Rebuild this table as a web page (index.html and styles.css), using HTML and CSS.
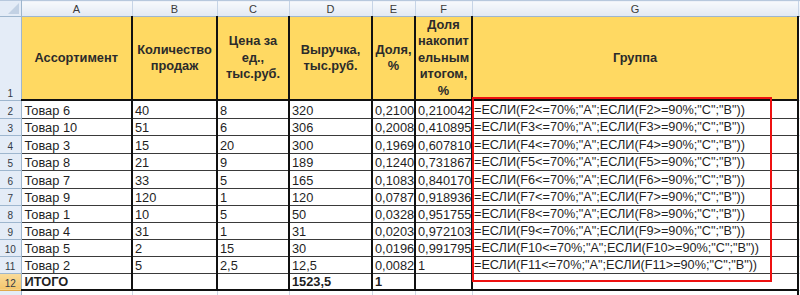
FILE: index.html
```html
<!DOCTYPE html>
<html lang="ru">
<head>
<meta charset="utf-8">
<title>ABC</title>
<link rel="stylesheet" href="styles.css">
</head>
<body>
<div class="sheet">
<table class="grid">
<colgroup>
<col class="c-rh"><col class="c-a"><col class="c-b"><col class="c-c"><col class="c-d"><col class="c-e"><col class="c-f"><col class="c-g"><col class="c-h">
</colgroup>
<tr class="colhdr">
<th class="corner"><span class="tri"></span></th><th>A</th><th>B</th><th>C</th><th>D</th><th>E</th><th>F</th><th>G</th><th class="hh"></th>
</tr>
<tr class="r1">
<th class="rh">1</th>
<td class="hd">Ассортимент</td>
<td class="hd">Количество<br>продаж</td>
<td class="hd">Цена за<br>ед.,<br>тыс.руб.</td>
<td class="hd">Выручка,<br>тыс.руб.</td>
<td class="hd">Доля,<br>%</td>
<td class="hd">Доля<br>накопит<br>ельным<br>итогом,<br>%</td>
<td class="hd">Группа</td>
<td class="ex"></td>
</tr>
<tr class="r h18"><th class="rh">2</th><td>Товар 6</td><td>40</td><td>8</td><td>320</td><td>0,210042</td><td>0,210042</td><td class="fm">=ЕСЛИ(F2&lt;=70%;"A";ЕСЛИ(F2&gt;=90%;"C";"B"))</td><td class="ex"></td></tr>
<tr class="r h17"><th class="rh">3</th><td>Товар 10</td><td>51</td><td>6</td><td>306</td><td>0,200853</td><td>0,410895</td><td class="fm">=ЕСЛИ(F3&lt;=70%;"A";ЕСЛИ(F3&gt;=90%;"C";"B"))</td><td class="ex"></td></tr>
<tr class="r h18"><th class="rh">4</th><td>Товар 3</td><td>15</td><td>20</td><td>300</td><td>0,196915</td><td>0,607810</td><td class="fm">=ЕСЛИ(F4&lt;=70%;"A";ЕСЛИ(F4&gt;=90%;"C";"B"))</td><td class="ex"></td></tr>
<tr class="r h17"><th class="rh">5</th><td>Товар 8</td><td>21</td><td>9</td><td>189</td><td>0,124057</td><td>0,731867</td><td class="fm">=ЕСЛИ(F5&lt;=70%;"A";ЕСЛИ(F5&gt;=90%;"C";"B"))</td><td class="ex"></td></tr>
<tr class="r h18"><th class="rh">6</th><td>Товар 7</td><td>33</td><td>5</td><td>165</td><td>0,108303</td><td>0,840170</td><td class="fm">=ЕСЛИ(F6&lt;=70%;"A";ЕСЛИ(F6&gt;=90%;"C";"B"))</td><td class="ex"></td></tr>
<tr class="r h17"><th class="rh">7</th><td>Товар 9</td><td>120</td><td>1</td><td>120</td><td>0,078766</td><td>0,918936</td><td class="fm">=ЕСЛИ(F7&lt;=70%;"A";ЕСЛИ(F7&gt;=90%;"C";"B"))</td><td class="ex"></td></tr>
<tr class="r h17"><th class="rh">8</th><td>Товар 1</td><td>10</td><td>5</td><td>50</td><td>0,032819</td><td>0,951755</td><td class="fm">=ЕСЛИ(F8&lt;=70%;"A";ЕСЛИ(F8&gt;=90%;"C";"B"))</td><td class="ex"></td></tr>
<tr class="r h17"><th class="rh">9</th><td>Товар 4</td><td>31</td><td>1</td><td>31</td><td>0,020348</td><td>0,972103</td><td class="fm">=ЕСЛИ(F9&lt;=70%;"A";ЕСЛИ(F9&gt;=90%;"C";"B"))</td><td class="ex"></td></tr>
<tr class="r h17"><th class="rh">10</th><td>Товар 5</td><td>2</td><td>15</td><td>30</td><td>0,019691</td><td>0,991795</td><td class="fm">=ЕСЛИ(F10&lt;=70%;"A";ЕСЛИ(F10&gt;=90%;"C";"B"))</td><td class="ex"></td></tr>
<tr class="r h17"><th class="rh">11</th><td>Товар 2</td><td>5</td><td>2,5</td><td>12,5</td><td>0,008205</td><td>1</td><td class="fm">=ЕСЛИ(F11&lt;=70%;"A";ЕСЛИ(F11&gt;=90%;"C";"B"))</td><td class="ex"></td></tr>
<tr class="r h17 tot"><th class="rh sel">12</th><td class="b">ИТОГО</td><td></td><td></td><td class="b">1523,5</td><td class="b">1</td><td></td><td></td><td class="ex"></td></tr>
<tr class="r h17 empty"><th class="rh">13</th><td></td><td></td><td></td><td></td><td></td><td></td><td></td><td class="ex"></td></tr>
</table>
<div class="redbox"></div>
</div>
</body>
</html>
```

FILE: styles.css
```css
html, body {
  margin: 0;
  padding: 0;
  background: #ffffff;
  overflow: hidden;
}

.sheet {
  position: relative;
  width: 800px;
  height: 295px;
  overflow: hidden;
  font-family: "Liberation Sans", Arial, sans-serif;
}

.grid {
  border-collapse: collapse;
  table-layout: fixed;
  width: 840px;
}

.c-rh { width: 21px; }
.c-a { width: 111px; }
.c-b { width: 85px; }
.c-c { width: 72px; }
.c-d { width: 83px; }
.c-e { width: 43px; }
.c-f { width: 57px; }
.c-g { width: 326px; }
.c-h { width: 42px; }

.grid td, .grid th {
  padding: 0;
  overflow: hidden;
  white-space: nowrap;
}

/* column header strip */
.colhdr th {
  height: 15px;
  background: linear-gradient(#f7f9fc, #e2e9f4);
  border-top: 1px solid #b7c8dd;
  border-left: 1px solid #c6d4e6;
  border-bottom: 1px solid #9eb6ce;
  font-weight: normal;
  font-size: 11px;
  color: #3b3b3b;
  text-align: center;
  vertical-align: middle;
  line-height: 14px;
}

.colhdr th.corner {
  position: relative;
  background: #e4ecf7;
  border-left: none;
  border-right: 1px solid #9eb6ce;
}

.tri {
  position: absolute;
  right: 2px;
  bottom: 2px;
  width: 0;
  height: 0;
  border-left: 11px solid transparent;
  border-bottom: 11px solid #c2d1e4;
}

/* row headers */
.rh {
  background: #e4ecf7;
  border-right: 1px solid #9eb6ce;
  border-bottom: 1px solid #9eb6ce;
  font-weight: normal;
  font-size: 10px;
  color: #333a45;
  text-align: center;
  vertical-align: bottom;
  line-height: 12px;
}

.rh.sel {
  background: linear-gradient(#f9dc9c, #f4c56c);
  border-bottom: 1px solid #e0a84b;
}

/* header row 1 */
.r1 td.hd {
  height: 80px;
  background: #ffd962;
  border-left: 2px solid #111;
  border-right: 2px solid #111;
  border-bottom: 2px solid #111;
  font-weight: bold;
  font-size: 12.8px;
  line-height: 16.4px;
  color: #2b2b2b;
  text-align: center;
  vertical-align: middle;
  white-space: nowrap;
}

.r1 td.hd:first-of-type {
  border-left: 1px solid #9eb6ce;
}

/* data rows */
.r td {
  border-left: 2px solid #111;
  border-right: 2px solid #111;
  border-bottom: 1px solid #3a3a3a;
  font-size: 12.8px;
  line-height: 15px;
  color: #1f1f1f;
  text-align: left;
  vertical-align: bottom;
  padding-left: 2px;
  text-overflow: clip;
}

.r td:first-of-type {
  border-left: 1px solid #d0d7e5;
  padding-left: 3px;
}

.r td.fm {
  padding-left: 1px;
  font-size: 12.7px;
}

.h17 { height: 17px; }
.h18 { height: 18px; }

.tot td {
  border-bottom: 2px solid #111;
}

.tot td.b {
  font-weight: bold;
}

.empty td {
  border-left: 1px solid #d0d7e5;
  border-right: 1px solid #d0d7e5;
  border-bottom: 1px solid #d0d7e5;
}

.grid td.ex,
.grid .r td.ex {
  background: #ffffff;
  border-left: 2px solid #111;
  border-right: 1px solid #d0d7e5;
  border-bottom: 1px solid #d0d7e5;
}

.colhdr th.hh {
  border-left: 1px solid #c6d4e6;
}

.redbox {
  position: absolute;
  left: 472px;
  top: 97px;
  width: 300px;
  height: 185px;
  box-sizing: border-box;
  border: 2px solid #ee1111;
  pointer-events: none;
}
```
